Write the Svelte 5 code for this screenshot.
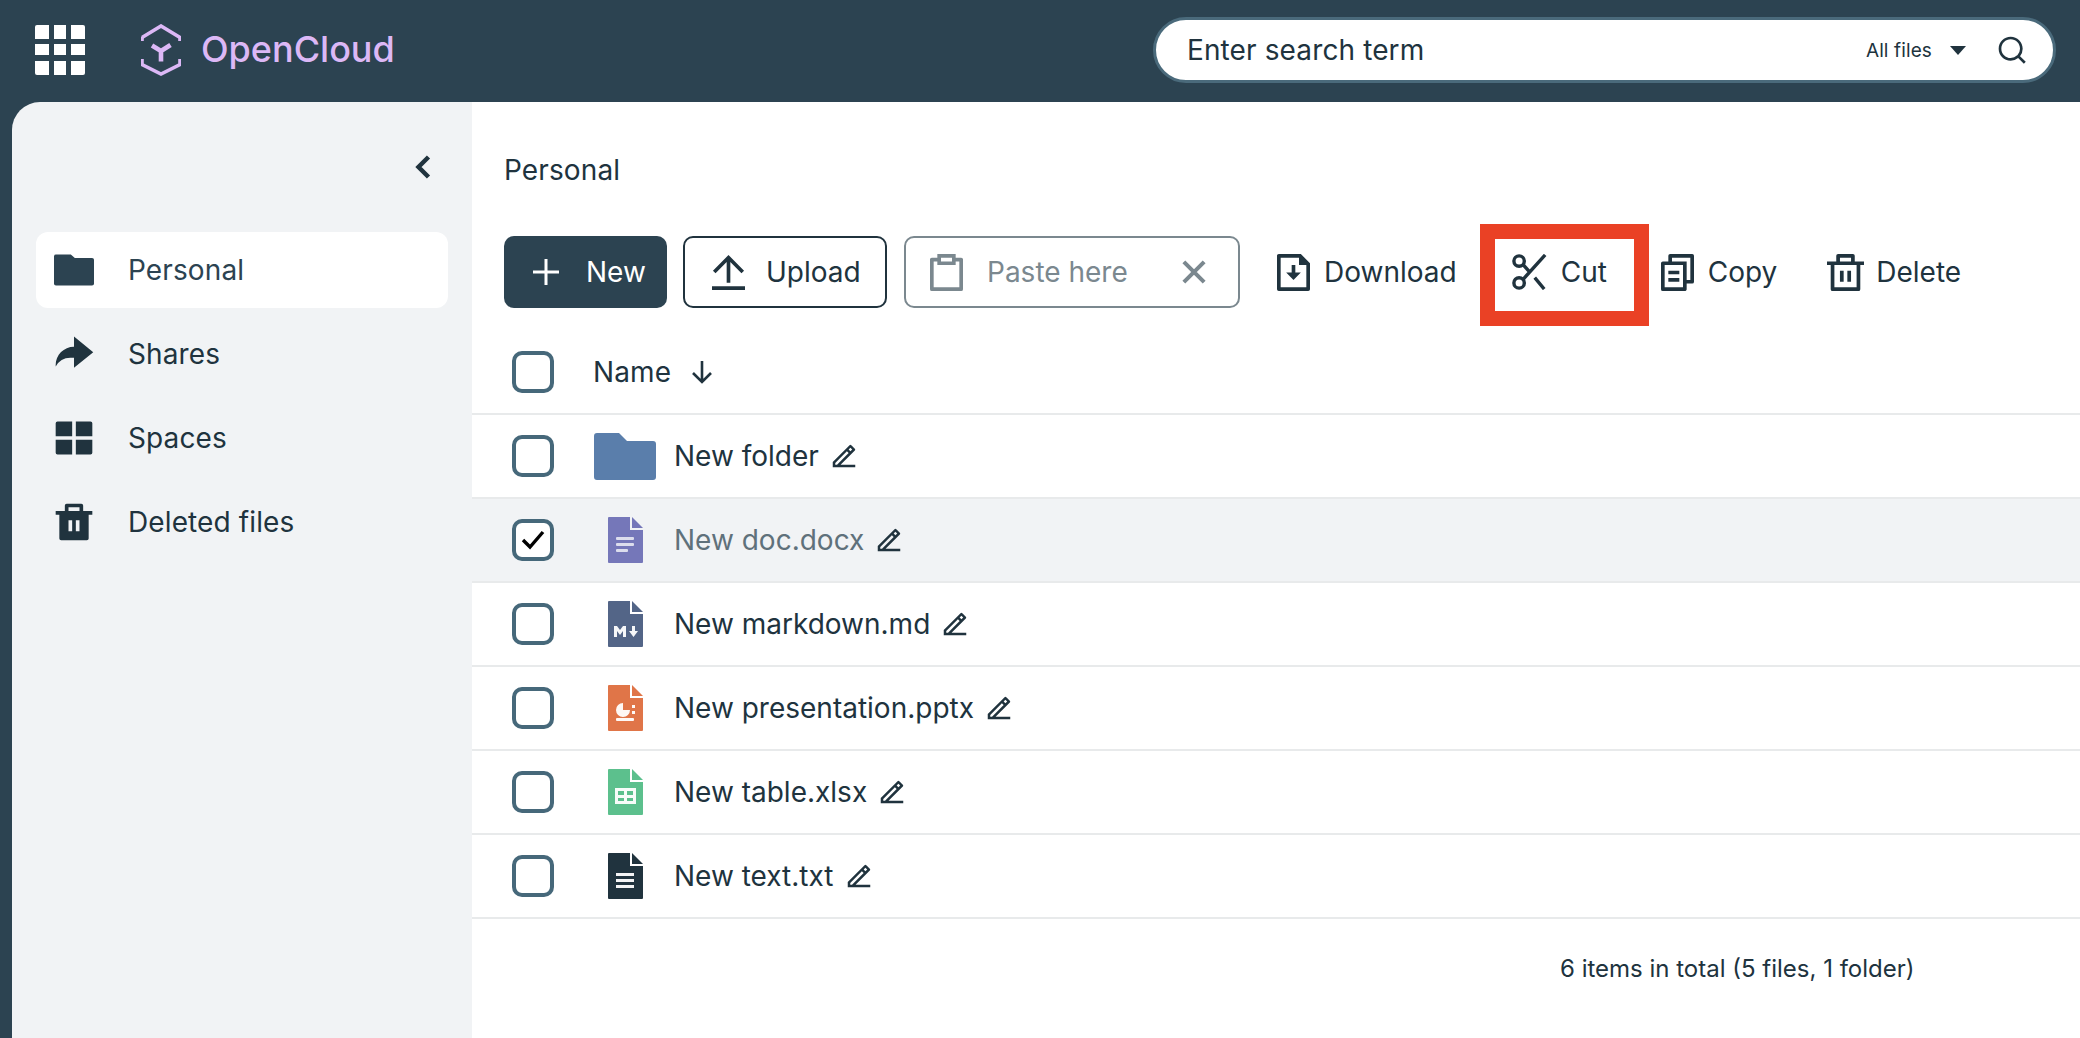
<script lang="ts">
  const nav = [
    { label: 'Personal', icon: 'folder', active: true, box: '0 -2 24 28' },
    { label: 'Shares', icon: 'share', active: false, box: '-0.1 -1.100 26.200 26.200' },
    { label: 'Spaces', icon: 'grid', active: false, box: '-1.100 -1.100 26.200 26.200' },
    { label: 'Deleted files', icon: 'trash', active: false, box: '-1.100 -1.100 26.200 26.200' }
  ]

  const navIcons: Record<string, string> = {
    folder: 'M12.414 5H21a1 1 0 0 1 1 1v14a1 1 0 0 1-1 1H3a1 1 0 0 1-1-1V4a1 1 0 0 1 1-1h7.414l2 2z',
    share: 'M13 14h-2a8.999 8.999 0 0 0-7.968 4.81A10.136 10.136 0 0 1 3 18C3 12.477 7.477 8 13 8V2.5L23.5 11 13 19.5V14z',
    grid: 'M22 12.999V20a1 1 0 0 1-1 1h-8v-8.001h9zm-11 0V21H3a1 1 0 0 1-1-1v-7.001h9zM11 3v7.999H2V4a1 1 0 0 1 1-1h8zm10 0a1 1 0 0 1 1 1v6.999h-9V3h8z',
    trash: 'M17 6h5v2h-2v13a1 1 0 0 1-1 1H5a1 1 0 0 1-1-1V8H2V6h5V3a1 1 0 0 1 1-1h8a1 1 0 0 1 1 1v3zM9 11v6h2v-6H9zm4 0v6h2v-6h-2zM9 4v2h6V4H9z'
  }

  const files = [
    { name: 'New folder', type: 'folder', color: '#5a7eab' },
    { name: 'New doc.docx', type: 'doc', color: '#7577b9', selected: true },
    { name: 'New markdown.md', type: 'md', color: '#536587' },
    { name: 'New presentation.pptx', type: 'ppt', color: '#e07548' },
    { name: 'New table.xlsx', type: 'xls', color: '#5cc08d' },
    { name: 'New text.txt', type: 'txt', color: '#20333e' }
  ]

  const editPath =
    'M5 19h1.414l9.314-9.314-1.414-1.414L5 17.586V19zm16 2H3v-4.243L16.435 3.322a1 1 0 0 1 1.414 0l2.829 2.829a1 1 0 0 1 0 1.414L9.243 19H21v2zM15.728 6.858l1.414 1.414 1.414-1.414-1.414-1.414-1.414 1.414z'
</script>

<div class="page">
  <header class="topbar">
    <button class="apps" aria-label="Applications">
      <svg width="50" height="50" viewBox="0 0 50 50" fill="#fff">
        <path d="M2 0h12v14H0V2a2 2 0 0 1 2-2z" />
        <rect x="19" width="12" height="14" />
        <path d="M36 0h12a2 2 0 0 1 2 2v12H36z" />
        <rect y="19" width="14" height="11" />
        <rect x="19" y="19" width="12" height="11" />
        <rect x="36" y="19" width="14" height="11" />
        <path d="M0 36h14v14H2a2 2 0 0 1-2-2z" />
        <rect x="19" y="36" width="12" height="14" />
        <path d="M36 36h14v12a2 2 0 0 1-2 2H36z" />
      </svg>
    </button>
    <div class="brand">
      <svg width="40" height="52" viewBox="0 0 40 52" fill="none" stroke="#dcb8f6" stroke-width="3.6">
        <path d="M1 13.5 20 2l19 11.5v3.5" stroke-linejoin="miter" />
        <path d="M1 13v4" />
        <path d="M1 35v5.500L20 50l19-9.500V35" />
        <path d="M11 21.500 20 27l9.500-6M20 27v10.500" stroke-width="4.600" />
      </svg>
      <span class="wordmark">OpenCloud</span>
    </div>
    <div class="search">
      <span class="search-text">Enter search term</span>
      <span class="scope">All files</span>
      <span class="caret"></span>
      <svg class="search-icon" width="32" height="32" viewBox="0 0 24 24" fill="#20333e">
        <path d="M18.031 16.617l4.283 4.282-1.415 1.415-4.282-4.283A8.960 8.960 0 0 1 11 20c-4.968 0-9-4.032-9-9s4.032-9 9-9 9 4.032 9 9a8.960 8.960 0 0 1-1.969 5.617zm-2.006-.742A6.977 6.977 0 0 0 18 11c0-3.868-3.133-7-7-7-3.868 0-7 3.132-7 7 0 3.867 3.132 7 7 7a6.977 6.977 0 0 0 4.875-1.975l.15-.15z" />
      </svg>
    </div>
  </header>

  <div class="body">
    <aside class="sidebar">
      <div class="collapse">
        <svg width="16" height="24" viewBox="0 0 16 24" fill="none" stroke="#20333e" stroke-width="4.500">
          <path d="M13.500 2 3.500 12l10 10" />
        </svg>
      </div>
      <nav>
        {#each nav as item}
          <div class="nav-item" class:active={item.active}>
            <svg width="48" height="48" viewBox={item.box} preserveAspectRatio="none" class="nav-icon" fill={item.active ? '#2c4351' : '#20333e'}>
              <path d={navIcons[item.icon]} />
            </svg>
            <span>{item.label}</span>
          </div>
        {/each}
      </nav>
    </aside>

    <main class="content">
      <div class="crumb">Personal</div>

      <div class="toolbar">
        <button class="btn primary">
          <svg width="28" height="28" viewBox="0 0 28 28" stroke="#fff" stroke-width="3"><path d="M14 1v26M1 14h26" /></svg>
          <span>New</span>
        </button>
        <button class="btn outline upload">
          <svg width="33" height="35" viewBox="3 2 18 19" fill="#20333e" preserveAspectRatio="none">
            <path d="M3 19h18v2H3v-2zM13 5.828V17h-2V5.828L4.929 11.900l-1.414-1.414L12 2l8.485 8.485-1.414 1.414L13 5.830z" />
          </svg>
          <span>Upload</span>
        </button>
        <button class="btn paste">
          <svg width="33" height="37" viewBox="3 2 18 20" fill="#7b888f" preserveAspectRatio="none">
            <path d="M7 4V2h10v2h3.007c.548 0 .993.445.993.993v16.014a.994.994 0 0 1-.993.993H3.993A.994.994 0 0 1 3 21.007V4.993C3 4.445 3.445 4 3.993 4H7zm0 2H5v14h14V6h-2v2H7V6zm2-2v2h6V4H9z" />
          </svg>
          <span class="paste-label">Paste here</span>
          <svg width="24" height="24" viewBox="0 0 26 26" stroke="#7b888f" stroke-width="4.400"><path d="M2 2l22 22M24 2 2 24" /></svg>
        </button>

        <button class="action download">
          <svg width="33" height="37" viewBox="3 2 18 20" fill="#20333e" preserveAspectRatio="none">
            <path d="M15 4H5v16h14V8h-4V4zM3 2.992C3 2.444 3.447 2 3.999 2H16l5 5v13.993A1 1 0 0 1 20.007 22H3.993A1 1 0 0 1 3 21.008V2.992zM13 12h3l-4 4-4-4h3V8h2v4z" />
          </svg>
          <span>Download</span>
        </button>
        <button class="action cut">
          <svg width="36" height="36" viewBox="0 0 38 38" fill="none" stroke="#20333e" stroke-width="3.600">
            <circle cx="7.500" cy="7.500" r="5.500" />
            <circle cx="7.500" cy="30.500" r="5.500" />
            <path d="M11.500 27 35 1M11.500 11l8 9M24 25l10 12" />
          </svg>
          <span>Cut</span>
        </button>
        <button class="action copy">
          <svg width="33" height="37" viewBox="3 2 18 20" fill="#20333e" preserveAspectRatio="none">
            <path d="M7 6V3a1 1 0 0 1 1-1h12a1 1 0 0 1 1 1v14a1 1 0 0 1-1 1h-3v3c0 .552-.45 1-1.007 1H4.007A1.001 1.001 0 0 1 3 21l.003-14c0-.552.45-1 1.006-1H7zM5.002 8L5 20h10V8H5.002zM9 6h8v10h2V4H9v2zm-2 5h6v2H7v-2zm0 4h6v2H7v-2z" />
          </svg>
          <span>Copy</span>
        </button>
        <button class="action delete">
          <svg width="37" height="37" viewBox="2 2 20 20" fill="#20333e">
            <path d="M17 6h5v2h-2v13a1 1 0 0 1-1 1H5a1 1 0 0 1-1-1V8H2V6h5V3a1 1 0 0 1 1-1h8a1 1 0 0 1 1 1v3zm1 2H6v12h12V8zm-9 3h2v6H9v-6zm4 0h2v6h-2v-6zM9 4v2h6V4H9z" />
          </svg>
          <span>Delete</span>
        </button>
      </div>

      <div class="table">
        <div class="row head">
          <span class="check"></span>
          <span class="head-name">Name</span>
          <svg width="22" height="24" viewBox="0 0 22 24" fill="none" stroke="#20333e" stroke-width="2.600"><path d="M11 1v21M2 13l9 9 9-9" /></svg>
        </div>

        {#each files as file}
          <div class="row" class:selected={file.selected}>
            <span class="check">
              {#if file.selected}
                <svg width="24" height="20" viewBox="0 0 24 20" fill="none" stroke="#000" stroke-width="3.400"><path d="M2 10l7 7L22 2" /></svg>
              {/if}
            </span>
            <span class="file-icon">
              {#if file.type === 'folder'}
                <svg width="62" height="47" viewBox="0 0 62 47" fill={file.color}>
                  <path d="M3 0h22l8 8h26a3 3 0 0 1 3 3v33a3 3 0 0 1-3 3H3a3 3 0 0 1-3-3V3a3 3 0 0 1 3-3z" />
                </svg>
              {:else}
                <svg width="35" height="46" viewBox="0 0 35 46" fill={file.color}>
                  <path d="M1 0h21v13h13v32a1 1 0 0 1-1 1H1a1 1 0 0 1-1-1V1a1 1 0 0 1 1-1z" />
                  <path d="M24 0l11 11H24z" />
                  <g fill="#fff" fill-opacity={file.type === 'doc' ? 0.75 : 0.95}>
                    {#if file.type === 'doc'}
                      <rect x="8" y="20" width="18" height="3" rx="1" />
                      <rect x="8" y="26" width="18" height="3" rx="1" />
                      <rect x="8" y="32" width="12" height="3" rx="1" />
                    {:else if file.type === 'txt'}
                      <rect x="8" y="20" width="18" height="3" />
                      <rect x="8" y="26" width="18" height="3" />
                      <rect x="8" y="32" width="18" height="3" />
                    {:else if file.type === 'md'}
                      <path d="M6 36V25h3l3 4 3-4h3v11h-3v-6l-3 4-3-4v6zM24 25h3v5h3l-4.500 6-4.500-6h3z" />
                    {:else if file.type === 'ppt'}
                      <path d="M15 18a7 7 0 1 0 7 7h-7z" />
                      <rect x="24" y="20" width="3" height="3" />
                      <rect x="24" y="26" width="3" height="3" />
                      <rect x="8" y="33" width="18" height="3" rx="1" />
                    {:else if file.type === 'xls'}
                      <path d="M7 19h21v16H7zm3 3v4h6v-4zm9 0v4h6v-4zm-9 7v3h6v-3zm9 0v3h6v-3z" fill-rule="evenodd" />
                    {/if}
                  </g>
                </svg>
              {/if}
            </span>
            <span class="file-name">{file.name}</span>
            <svg class="edit" width="30" height="30" viewBox="0 0 24 24" fill="#20333e"><path d={editPath} /></svg>
          </div>
        {/each}
      </div>

      <div class="summary">6 items in total (5 files, 1 folder)</div>
    </main>
  </div>
</div>

<style>
  :global(body) { margin: 0; background: #2c4351; }
  .page {
    height: 1038px;
    overflow: hidden;
    display: flex;
    flex-direction: column;
    font-family: "Inter", "Noto Sans", sans-serif;
    font-size: 28px;
    letter-spacing: 0.12px;
    color: #20333e;
  }
  button { font: inherit; color: inherit; background: none; border: 0; padding: 0; margin: 0; }

  .topbar { height: 102px; flex: none; display: flex; align-items: center; background: #2c4351; padding: 0 24px 2px 35px; box-sizing: border-box; }
  .apps { display: flex; width: 50px; height: 50px; }
  .brand { display: flex; align-items: center; margin-left: 56px; gap: 20px; }
  .wordmark { color: #dcb8f6; font-size: 36px; font-weight: 500; letter-spacing: 0; margin-top: -2px; }
  .search {
    margin-left: auto;
    width: 903px;
    height: 66px;
    box-sizing: border-box;
    background: #fff;
    border: 3px solid #4a6a7b;
    border-radius: 33px;
    display: flex;
    align-items: center;
    padding: 0 25px 0 31px;
  }
  .search-text { flex: 1; }
  .scope { font-size: 19px; margin-right: 18px; }
  .caret { width: 0; height: 0; border: 8px solid transparent; border-top: 9px solid #20333e; border-bottom: 0; margin-right: 30px; }
  .search-icon { display: block; }

  .body { flex: 1; display: flex; min-height: 0; padding-left: 12px; }
  .sidebar { width: 460px; flex: none; background: #f1f3f5; border-top-left-radius: 28px; padding: 0 24px; box-sizing: border-box; }
  .collapse { height: 130px; display: flex; justify-content: flex-end; padding: 53px 17px 0 0; box-sizing: border-box; }
  nav { display: flex; flex-direction: column; gap: 8px; }
  .nav-item { height: 76px; display: flex; align-items: center; border-radius: 12px; padding-left: 14px; gap: 30px; }
  .nav-item.active { background: #fff; color: #2c4351; }
  .nav-icon { flex: none; }

  .content { flex: 1; background: #fff; min-width: 0; }
  .crumb { height: 134px; box-sizing: border-box; display: flex; align-items: center; padding: 2px 0 0 32px; }
  .toolbar { height: 72px; display: flex; align-items: center; padding-left: 32px; }
  .btn { height: 72px; box-sizing: border-box; border-radius: 10px; display: flex; align-items: center; flex: none; }
  .primary { width: 163px; background: #2c4351; color: #fff; padding-left: 28px; gap: 26px; }
  .outline { border: 2.500px solid #20333e; }
  .upload { width: 204px; margin-left: 16px; padding-left: 27px; gap: 21px; }
  .paste { width: 336px; margin-left: 17px; border: 2.500px solid #7b888f; color: #7b888f; padding-left: 24px; }
  .paste-label { margin-left: 24px; flex: 1; text-align: left; }
  .paste svg:last-child { margin-right: 32px; }

  .action { display: flex; align-items: center; gap: 14px; flex: none; }
  .download { margin-left: 37px; }
  .cut {
    margin: -12px 0 -18px 23px;
    width: 169px;
    height: 102px;
    box-sizing: border-box;
    border: 15px solid #ea4125;
    padding: 0 0 6px 17px;
    gap: 13px;
  }
  .copy { margin-left: 12px; }
  .delete { margin-left: 50px; gap: 12px; }

  .table { margin-top: 22px; }
  .row { height: 84px; box-sizing: border-box; display: flex; align-items: center; border-bottom: 2px solid #e8eaeb; padding-left: 40px; }
  .row.head { height: 85px; }
  .row.selected { background: #f1f3f5; }
  .row.selected .file-name { color: #5f717b; }
  .check {
    width: 42px;
    height: 42px;
    flex: none;
    box-sizing: border-box;
    border: 4px solid #46687a;
    border-radius: 10px;
    background: #fff;
    display: flex;
    align-items: center;
    justify-content: center;
  }
  .head-name { margin-left: 39px; margin-right: 20px; }
  .file-icon { width: 62px; margin-left: 40px; flex: none; display: flex; justify-content: center; }
  .file-name { margin-left: 18px; letter-spacing: 0; }
  .edit { margin-left: 10px; flex: none; }

  .summary { margin-top: 32px; padding-left: 1088px; line-height: 36px; font-size: 24px; letter-spacing: 0; }
</style>
